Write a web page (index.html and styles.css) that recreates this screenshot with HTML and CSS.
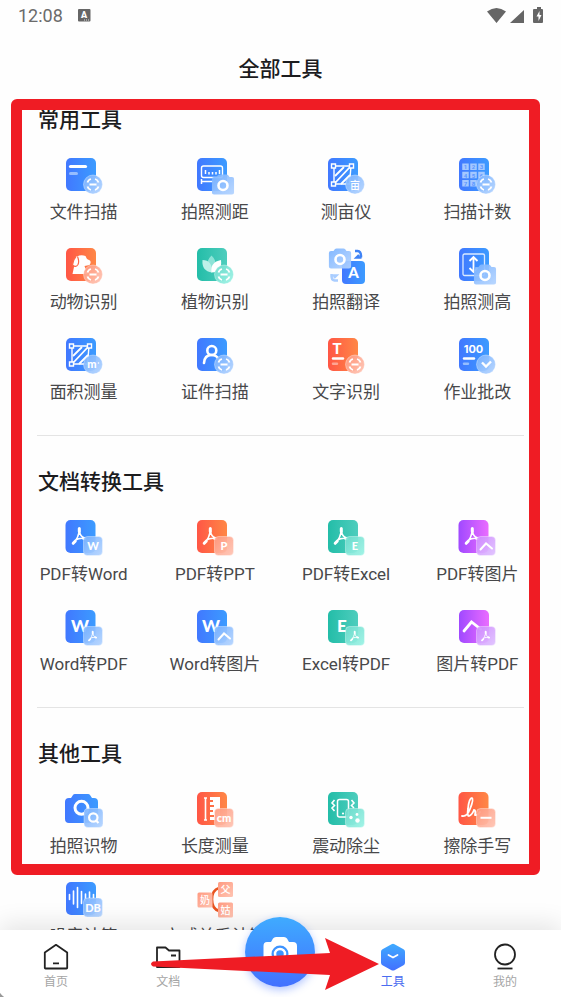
FILE: index.html
```html
<!DOCTYPE html>
<html lang="zh-CN">
<head>
    <meta charset="UTF-8">
    <meta name="viewport" content="width=device-width, initial-scale=1.0">
    <title>全部工具</title>
    <link rel="stylesheet" href="styles.css">
</head>
<body>
    <!-- Shared gradients and glyphs -->
    <svg class="sprite" aria-hidden="true">
        <defs>
            <linearGradient id="blue"><stop offset="0" stop-color="#4178ff"/><stop offset="1" stop-color="#3c9bff"/></linearGradient>
            <linearGradient id="orange"><stop offset="0" stop-color="#ff5645"/><stop offset="1" stop-color="#ff8746"/></linearGradient>
            <linearGradient id="teal"><stop offset="0" stop-color="#23bda8"/><stop offset="1" stop-color="#4ecdbd"/></linearGradient>
            <linearGradient id="purple"><stop offset="0" stop-color="#a049ff"/><stop offset="1" stop-color="#ea6cff"/></linearGradient>
            <linearGradient id="blueSoft" x2="1" y2="1"><stop offset="0" stop-color="#79b2ff"/><stop offset="1" stop-color="#b4d4ff"/></linearGradient>
            <linearGradient id="orangeSoft" x2="1" y2="1"><stop offset="0" stop-color="#ff9a80"/><stop offset="1" stop-color="#ffc4b3"/></linearGradient>
            <linearGradient id="tealSoft" x2="1" y2="1"><stop offset="0" stop-color="#70dccd"/><stop offset="1" stop-color="#9bf3e5"/></linearGradient>
            <linearGradient id="purpleSoft" x2="1" y2="1"><stop offset="0" stop-color="#d08bff"/><stop offset="1" stop-color="#dfc2ff"/></linearGradient>
            <linearGradient id="blueDown" x2="0" y2="1"><stop offset="0" stop-color="#3fabff"/><stop offset="1" stop-color="#4270ff"/></linearGradient>
        </defs>
        <symbol id="scan" viewBox="0 0 20 20">
            <path d="M4.500 8Q5.200 5.200 8 4.500M12 4.500q2.800.7 3.500 3.500M15.500 12q-.7 2.800-3.500 3.500M8 15.500Q5.200 14.800 4.500 12M6.500 10h7" fill="none" stroke="#fff" stroke-width="1.800"/>
        </symbol>
        <symbol id="pdf" viewBox="0 0 16 20">
            <path d="M8.300 3.500C8 8.500 6 13.500 2.500 17M8.300 4C8.500 8.500 10.500 11 14 12.500M4.500 14C7.500 12.200 10.500 11.800 14 12.500" fill="none" stroke="#fff" stroke-width="1.600" stroke-linecap="round"/>
            <path d="M8.300 2.600v3M2.200 17.300l2-2M12.500 12.300l1.500.4" stroke="#fff" stroke-width="3" stroke-linecap="round"/>
        </symbol>
        <symbol id="area" viewBox="0 0 40 38">
            <g fill="none" stroke="#fff">
                <path d="M9 18l9-9M9 25L24 9M15 26l9-9" stroke-width="1.800"/>
                <path d="M8 8h17l-1.500 18H8z" stroke-width="1.400"/>
                <path class="knot" d="M5.500 6h4v4h-4zM23.500 6h4v4h-4zM5.500 24h4v4h-4z" stroke-width="1.400"/>
            </g>
        </symbol>
        <symbol id="camera" viewBox="0 0 23 21">
            <path d="M2.500 3H5L6.500 1Q7 .4 8 .4h7q1 0 1.500.6L18 3h2.500Q22.600 3 22.600 5v13.500q0 2.100-2.100 2.100h-18Q.4 20.600.4 18.500V5Q.4 3 2.500 3z" fill="url(#blueSoft)" opacity=".92"/>
            <circle cx="11.500" cy="11.500" r="4.500" fill="none" stroke="#fff" stroke-width="2.600"/>
        </symbol>
    </svg>

    <header class="status-bar">
        <span class="time">12:08</span>
        <svg class="ime" width="13" height="13" viewBox="0 0 13 13"><rect width="12.500" height="12.500" rx="1" fill="#666"/><text x="6" y="9" class="ime-text">A</text><path d="M6 11h5" stroke="#ddd" stroke-dasharray="1"/></svg>
        <svg class="signals" width="56" height="17" viewBox="0 0 56 17" fill="#666">
            <path d="M0 4.500Q9.500-2.500 19 4.500L9.500 16zM37 3v13H23zM48 2h2V0h4v2h1q1 0 1 1v12q0 1-1 1h-8q-1 0-1-1V3q0-1 1-1z"/>
            <path d="M52.500 4L49.500 9.500h2V14l3-6h-2z" fill="#fff"/>
        </svg>
    </header>
    <h1>全部工具</h1>

    <main>
        <section>
            <h2>常用工具</h2>
            <div class="tools">
                <a class="tool" href="#">
                    <svg class="icon" viewBox="0 0 40 38">
                        <rect x="2" width="30" height="33" rx="5" fill="url(#blue)"/>
                        <path d="M6.500 8.500h15" stroke="#fff" stroke-width="3.200" stroke-linecap="round"/>
                        <path d="M6.500 15.500h6" stroke="#96bdff" stroke-width="3" stroke-linecap="round"/>
                        <circle cx="29" cy="26.500" r="9.500" fill="url(#blueSoft)" class="badge"/>
                        <use href="#scan" x="19" y="16.500" width="20" height="20"/>
                    </svg>
                    <span>文件扫描</span>
                </a>
                <a class="tool" href="#">
                    <svg class="icon" viewBox="0 0 40 38">
                        <rect x="2" width="30" height="33" rx="5" fill="url(#blue)"/>
                        <rect x="6.500" y="8" width="21" height="11.500" rx="2" fill="none" stroke="#fff" stroke-width="1.400"/>
                        <path d="M10.500 12v4M14 14v2.500M17.500 14v2.500M21 14v2.500M24.500 12v4M6.500 21v5M6.500 23.500h12" stroke="#fff" stroke-width="1.500"/>
                        <use href="#camera" x="16.500" y="16" width="23" height="21"/>
                    </svg>
                    <span>拍照测距</span>
                </a>
                <a class="tool" href="#">
                    <svg class="icon" viewBox="0 0 40 38">
                        <rect x="2" width="30" height="33" rx="5" fill="url(#blue)"/>
                        <use href="#area" width="40" height="38"/>
                        <circle cx="29" cy="26.500" r="9.500" fill="url(#blueSoft)" class="badge"/>
                        <text x="29" y="30.500" class="glyph mu">亩</text>
                    </svg>
                    <span>测亩仪</span>
                </a>
                <a class="tool" href="#">
                    <svg class="icon" viewBox="0 0 40 38">
                        <rect x="2" width="30" height="33" rx="5" fill="url(#blue)"/>
                        <path d="M8.500 5.500v23M16.500 5.500v23M24.500 5.500v23" stroke="#a4c8ff" stroke-width="6.500" stroke-dasharray="6.500 1.700"/>
                        <g class="digits">
                            <text x="8.500" y="11.200">1</text><text x="16.500" y="11.200">2</text><text x="24.500" y="11.200">3</text>
                            <text x="8.500" y="19.500">4</text><text x="16.500" y="19.500">5</text><text x="24.500" y="19.500">6</text>
                            <text x="8.500" y="27.700">7</text><text x="16.500" y="27.700">8</text>
                        </g>
                        <circle cx="29" cy="26.500" r="9.500" fill="url(#blueSoft)" class="badge"/>
                        <use href="#scan" x="19" y="16.500" width="20" height="20"/>
                    </svg>
                    <span>扫描计数</span>
                </a>
                <a class="tool" href="#">
                    <svg class="icon" viewBox="0 0 40 38">
                        <rect x="2" width="30" height="33" rx="5" fill="url(#orange)"/>
                        <path d="M13 8.500q4-2 8.500-.5l1.500 3 3 1.500q1.500 2-.5 4.500l-5 1 3 8H8.500l1.500-7z" fill="#fff"/>
                        <path d="M12 8.500q-3 3-3.500 8.500 3.500 3 5.500-.5 1.500-3-.5-8" fill="#fff" stroke="#ff6846" stroke-width="1.200"/>
                        <circle cx="29" cy="26.500" r="9.500" fill="url(#orangeSoft)" class="badge"/>
                        <use href="#scan" x="19" y="16.500" width="20" height="20"/>
                    </svg>
                    <span>动物识别</span>
                </a>
                <a class="tool" href="#">
                    <svg class="icon" viewBox="0 0 40 38">
                        <rect x="2" width="30" height="33" rx="5" fill="url(#teal)"/>
                        <path d="M16.500 7.500q8 8 0 17-8-9 0-17z" fill="#8de3d7"/>
                        <path d="M7.500 12q10 0 9.500 12.500Q6.500 23 7.500 12z" fill="#bdf1e9"/>
                        <path d="M26 12q1.500 12-9.500 12.500Q15 14 26 12z" fill="#fff"/>
                        <circle cx="29" cy="26.500" r="9.500" fill="url(#tealSoft)" class="badge"/>
                        <use href="#scan" x="19" y="16.500" width="20" height="20"/>
                    </svg>
                    <span>植物识别</span>
                </a>
                <a class="tool" href="#">
                    <svg class="icon" viewBox="0 0 40 38">
                        <rect x="16" y="13" width="23" height="23" rx="4" fill="url(#blue)"/>
                        <use href="#camera" x="2" y="0" width="24" height="21"/>
                        <text x="27.500" y="30" class="glyph medium">A</text>
                        <path d="M29 3h2.500q4 .5 3.500 6.500M35.500 9.500h-5L33 7" fill="none" stroke="#3f83f5" stroke-width="2.400"/>
                        <path d="M5.500 26q-.5 6 3 6.500h3.500M5.500 27.500h5L8 30" fill="none" stroke="#a9cdff" stroke-width="2.400"/>
                    </svg>
                    <span>拍照翻译</span>
                </a>
                <a class="tool" href="#">
                    <svg class="icon" viewBox="0 0 40 38">
                        <rect x="2" width="30" height="33" rx="5" fill="url(#blue)"/>
                        <rect x="6" y="6" width="21.500" height="21.500" rx="1.500" fill="none" stroke="#dceaff" stroke-width="1.300"/>
                        <path d="M16.500 9.500v14M12.500 13l4-4 4 4M12.500 20l4 4 4-4" fill="none" stroke="#fff" stroke-width="1.800"/>
                        <use href="#camera" x="16.500" y="16" width="23" height="21"/>
                    </svg>
                    <span>拍照测高</span>
                </a>
                <a class="tool" href="#">
                    <svg class="icon" viewBox="0 0 40 38">
                        <rect x="2" width="30" height="33" rx="5" fill="url(#blue)"/>
                        <use href="#area" width="40" height="38"/>
                        <circle cx="29" cy="26.500" r="9.500" fill="url(#blueSoft)" class="badge"/>
                        <text x="28" y="29.500" class="glyph small">m</text>
                        <circle cx="34.500" cy="25" r=".8" fill="#fff"/>
                    </svg>
                    <span>面积测量</span>
                </a>
                <a class="tool" href="#">
                    <svg class="icon" viewBox="0 0 40 38">
                        <rect x="2" width="30" height="33" rx="5" fill="url(#blue)"/>
                        <circle cx="16.800" cy="12.500" r="4.500" fill="none" stroke="#fff" stroke-width="2.600"/>
                        <path d="M9 25q.5-8 7.500-8 5 0 7 4" fill="none" stroke="#fff" stroke-width="2.600" stroke-linecap="round"/>
                        <circle cx="29" cy="26.500" r="9.500" fill="url(#blueSoft)" class="badge"/>
                        <use href="#scan" x="19" y="16.500" width="20" height="20"/>
                    </svg>
                    <span>证件扫描</span>
                </a>
                <a class="tool" href="#">
                    <svg class="icon" viewBox="0 0 40 38">
                        <rect x="2" width="30" height="33" rx="5" fill="url(#orange)"/>
                        <text x="11" y="16" class="glyph medium">T</text>
                        <path d="M7 20.500h10" stroke="#fff" stroke-width="2.400" stroke-linecap="round"/>
                        <path d="M7 25.700h4" stroke="#ffa594" stroke-width="2.400" stroke-linecap="round"/>
                        <circle cx="29" cy="26.500" r="9.500" fill="url(#orangeSoft)" class="badge"/>
                        <use href="#scan" x="19" y="16.500" width="20" height="20"/>
                    </svg>
                    <span>文字识别</span>
                </a>
                <a class="tool" href="#">
                    <svg class="icon" viewBox="0 0 40 38">
                        <rect x="2" width="30" height="33" rx="5" fill="url(#blue)"/>
                        <text x="16.500" y="15" class="glyph score">100</text>
                        <path d="M7 20.500h10" stroke="#fff" stroke-width="2.400" stroke-linecap="round"/>
                        <path d="M7 25.700h4" stroke="#96bdff" stroke-width="2.400" stroke-linecap="round"/>
                        <circle cx="29" cy="26.500" r="9.500" fill="url(#blueSoft)" class="badge"/>
                        <path d="M25 24.500l4 4 5-5" fill="none" stroke="#fff" stroke-width="2.400"/>
                    </svg>
                    <span>作业批改</span>
                </a>
            </div>
        </section>

        <section>
            <h2>文档转换工具</h2>
            <div class="tools">
                <a class="tool" href="#">
                    <svg class="icon" viewBox="0 0 40 38">
                        <rect x="1.500" width="30" height="33" rx="5" fill="url(#blue)"/>
                        <use href="#pdf" x="7" y="6" width="16" height="20"/>
                        <rect x="19.500" y="16.500" width="19" height="19" rx="4" fill="url(#blueSoft)" class="badge"/>
                        <text x="29" y="30" class="glyph small">W</text>
                    </svg>
                    <span>PDF转Word</span>
                </a>
                <a class="tool" href="#">
                    <svg class="icon" viewBox="0 0 40 38">
                        <rect x="2" width="30" height="33" rx="5" fill="url(#orange)"/>
                        <use href="#pdf" x="7" y="6" width="16" height="20"/>
                        <rect x="19.500" y="16.500" width="19" height="19" rx="4" fill="url(#orangeSoft)" class="badge"/>
                        <text x="29" y="30" class="glyph small">P</text>
                    </svg>
                    <span>PDF转PPT</span>
                </a>
                <a class="tool" href="#">
                    <svg class="icon" viewBox="0 0 40 38">
                        <rect x="2" width="30" height="33" rx="5" fill="url(#teal)"/>
                        <use href="#pdf" x="7" y="6" width="16" height="20"/>
                        <rect x="19.500" y="16.500" width="19" height="19" rx="4" fill="url(#tealSoft)" class="badge"/>
                        <text x="29" y="30" class="glyph small">E</text>
                    </svg>
                    <span>PDF转Excel</span>
                </a>
                <a class="tool" href="#">
                    <svg class="icon" viewBox="0 0 40 38">
                        <rect x="1.500" width="30" height="33" rx="5" fill="url(#purple)"/>
                        <use href="#pdf" x="7" y="6" width="16" height="20"/>
                        <rect x="19.500" y="16.500" width="19" height="19" rx="4" fill="url(#purpleSoft)" class="badge"/>
                        <path d="M23.500 29.500l5.500-6 6 5" fill="none" stroke="#fff" stroke-width="2" stroke-linecap="round"/>
                    </svg>
                    <span>PDF转图片</span>
                </a>
                <a class="tool" href="#">
                    <svg class="icon" viewBox="0 0 40 38">
                        <rect x="1.500" width="30" height="33" rx="5" fill="url(#blue)"/>
                        <text x="16" y="22" class="glyph large">W</text>
                        <rect x="19.500" y="16.500" width="19" height="19" rx="4" fill="url(#blueSoft)" class="badge"/>
                        <use href="#pdf" x="23.500" y="20" width="10" height="12"/>
                    </svg>
                    <span>Word转PDF</span>
                </a>
                <a class="tool" href="#">
                    <svg class="icon" viewBox="0 0 40 38">
                        <rect x="2" width="30" height="33" rx="5" fill="url(#blue)"/>
                        <text x="16" y="22" class="glyph large">W</text>
                        <rect x="19.500" y="16.500" width="19" height="19" rx="4" fill="url(#blueSoft)" class="badge"/>
                        <path d="M23.500 29.500l5.500-6 6 5" fill="none" stroke="#fff" stroke-width="2" stroke-linecap="round"/>
                    </svg>
                    <span>Word转图片</span>
                </a>
                <a class="tool" href="#">
                    <svg class="icon" viewBox="0 0 40 38">
                        <rect x="2" width="30" height="33" rx="5" fill="url(#teal)"/>
                        <text x="16" y="22" class="glyph large">E</text>
                        <rect x="19.500" y="16.500" width="19" height="19" rx="4" fill="url(#tealSoft)" class="badge"/>
                        <use href="#pdf" x="23.500" y="20" width="10" height="12"/>
                    </svg>
                    <span>Excel转PDF</span>
                </a>
                <a class="tool" href="#">
                    <svg class="icon" viewBox="0 0 40 38">
                        <rect x="2" width="30" height="33" rx="5" fill="url(#purple)"/>
                        <path d="M7 21l7.500-9 9 7" fill="none" stroke="#fff" stroke-width="2.800" stroke-linecap="round"/>
                        <rect x="19.500" y="16.500" width="19" height="19" rx="4" fill="url(#purpleSoft)" class="badge"/>
                        <use href="#pdf" x="23.500" y="20" width="10" height="12"/>
                    </svg>
                    <span>图片转PDF</span>
                </a>
            </div>
        </section>

        <section>
            <h2>其他工具</h2>
            <div class="tools">
                <a class="tool" href="#">
                    <svg class="icon" viewBox="0 0 40 38">
                        <path d="M5 6h2l2-3q.5-1 2-1h13q1.500 0 2 1l2 3h2q4 0 4 4v17q0 4-4 4H5q-4 0-4-4V10q0-4 4-4z" fill="url(#blue)"/>
                        <circle cx="17.500" cy="15.800" r="6.500" fill="none" stroke="#fff" stroke-width="3"/>
                        <rect x="20" y="16.500" width="19" height="19" rx="4" fill="url(#blueSoft)" class="badge"/>
                        <circle cx="29.300" cy="25.500" r="4.200" fill="none" stroke="#fff" stroke-width="2.200"/>
                        <path d="M31.500 28l3 3" stroke="#fff" stroke-width="2.200"/>
                    </svg>
                    <span>拍照识物</span>
                </a>
                <a class="tool" href="#">
                    <svg class="icon" viewBox="0 0 40 38">
                        <rect x="2" width="30" height="33" rx="5" fill="url(#orange)"/>
                        <path d="M10.500 6v22M9 6h3M9 28h3" fill="none" stroke="#fff" stroke-width="1.600"/>
                        <path d="M15 5h10v23H15v-3h4v-2h-4v-3h3v-2h-3v-3h4v-2h-4V10h3V8h-3z" fill="#fff"/>
                        <rect x="19.500" y="16.500" width="19" height="19" rx="4" fill="url(#orangeSoft)" class="badge"/>
                        <text x="29" y="30" class="glyph small">cm</text>
                    </svg>
                    <span>长度测量</span>
                </a>
                <a class="tool" href="#">
                    <svg class="icon" viewBox="0 0 40 38">
                        <rect x="2" width="30" height="33" rx="5" fill="url(#teal)"/>
                        <rect x="11.500" y="7.500" width="11" height="17.500" rx="2" fill="none" stroke="#fff" stroke-width="1.500"/>
                        <path d="M8.500 8L6 11l2.500 2.500L6 16l2.500 3M25.500 8l2.500 3-2.500 2.500L28 16" fill="none" stroke="#fff" stroke-width="1.600"/>
                        <circle cx="17" cy="21.500" r="1.100" fill="#fff"/>
                        <rect x="19.500" y="16.500" width="19" height="19" rx="4" fill="url(#tealSoft)" class="badge"/>
                        <g fill="#fff"><circle cx="25" cy="25.500" r="1.700"/><circle cx="31" cy="22.500" r="1.400"/><circle cx="31.500" cy="28.500" r="2.200"/></g>
                    </svg>
                    <span>震动除尘</span>
                </a>
                <a class="tool" href="#">
                    <svg class="icon" viewBox="0 0 40 38">
                        <rect x="1.500" width="30" height="33" rx="5" fill="url(#orange)"/>
                        <path d="M5 24q5 1 8-7 4-10 2-11-3 0-4 11-1 7 1 7 3-1 5-6 2 0 1 5 2 1 5-3" fill="none" stroke="#fff" stroke-width="1.800" stroke-linecap="round"/>
                        <rect x="19.500" y="16.500" width="19" height="19" rx="4" fill="url(#orangeSoft)" class="badge"/>
                        <path d="M23.500 25.800h11" stroke="#fff" stroke-width="2"/>
                    </svg>
                    <span>擦除手写</span>
                </a>
                <a class="tool" href="#">
                    <svg class="icon" viewBox="0 0 40 38">
                        <rect x="2" width="30" height="33" rx="5" fill="url(#blue)"/>
                        <path d="M5.500 12.500v5M9.500 9v13M13.500 5.500v20M17.500 9.500v12M21.500 12v7M25.500 10v8M29.500 12.500v4" stroke="#fff" stroke-width="1.600" stroke-linecap="round"/>
                        <rect x="19.500" y="16" width="19" height="19" rx="4" fill="url(#blueSoft)" class="badge"/>
                        <text x="29" y="29.500" class="glyph small">DB</text>
                    </svg>
                    <span>噪音计算</span>
                </a>
                <a class="tool" href="#">
                    <svg class="icon" viewBox="0 0 40 38">
                        <path d="M24 6q-7 2-7 11.500T24 29" fill="none" stroke="#e8541f" stroke-width="2.600"/>
                        <rect x="2.500" y="10.500" width="15" height="15" rx="1.500" fill="url(#orangeSoft)"/>
                        <rect x="23" y="0" width="15" height="15" rx="1.500" fill="url(#orangeSoft)"/>
                        <rect x="23" y="20.500" width="15" height="15" rx="1.500" fill="url(#orangeSoft)"/>
                        <text x="10" y="21.500" class="glyph kin">奶</text>
                        <text x="30.500" y="11" class="glyph kin">父</text>
                        <text x="30.500" y="31.500" class="glyph kin">姑</text>
                    </svg>
                    <span>亲戚关系计算</span>
                </a>
            </div>
        </section>
    </main>

    <nav class="tab-bar">
        <a class="tab" href="#">
            <svg width="28" height="28" viewBox="0 0 28 28" fill="none" stroke="#222" stroke-width="1.800" stroke-linejoin="round"><path d="M14 1.800L25.200 9.500v15.300q0 .7-.7.7h-21q-.7 0-.7-.7V9.500zM11 20.300h6"/></svg>
            <span>首页</span>
        </a>
        <a class="tab" href="#">
            <svg width="28" height="28" viewBox="0 0 28 28" fill="none" stroke="#222" stroke-width="1.800" stroke-linejoin="round"><path d="M3 4.500h8.500l3.500 3h10.500v16.500H3zM17 12.500h5"/></svg>
            <span>文档</span>
        </a>
        <div class="tab">
            <button class="shoot" type="button" aria-label="拍照">
                <svg width="70" height="70" viewBox="0 0 70 70">
                    <path d="M22 25h4l2-3.500q1-1.500 3-1.500h8q2 0 3 1.500l2 3.500h4q4 0 4 4v17q0 4-4 4H22q-3.500 0-3.500-4V29q0-4 3.500-4z" fill="#fff"/>
                    <circle cx="35" cy="37" r="7.500" fill="#3d93ff" stroke="#3d93ff" stroke-width="2"/>
                    <circle cx="35" cy="37" r="5" fill="none" stroke="#fff" stroke-width="2.500"/>
                </svg>
            </button>
        </div>
        <a class="tab active" href="#">
            <svg width="28" height="28" viewBox="0 0 28 28"><path d="M12.500 1.200q1.500-.8 3 0l9 5q1.500.8 1.500 2.500v11q0 1.700-1.500 2.500l-9 5q-1.500.8-3 0l-9-5Q2 21.400 2 19.700v-11Q2 7 3.500 6.200z" fill="url(#blueDown)"/><path d="M9.500 12l4.500 2.500 4.500-2.500" fill="none" stroke="#fff" stroke-width="1.800" stroke-linecap="round"/></svg>
            <span>工具</span>
        </a>
        <a class="tab" href="#">
            <svg width="28" height="28" viewBox="0 0 28 28" fill="none" stroke="#222" stroke-width="1.800"><circle cx="14" cy="11.500" r="10"/><path d="M6.500 25.500h15"/></svg>
            <span>我的</span>
        </a>
        <svg class="arrow" width="230" height="54" viewBox="0 0 230 54"><path d="M3 24.500L180 16 175 1 229 27 175 53 180 38 3 29.500Q-1 27 3 24.500z" fill="#ef1c24"/></svg>
    </nav>

    <div class="frame"></div>
</body>
</html>
```

FILE: styles.css
```css
* {
    box-sizing: border-box;
}

body {
    position: relative;
    display: flex;
    flex-direction: column;
    height: 100vh;
    margin: 0;
    overflow: hidden;
    background-color: #fefefe;
    color: #1c1c1e;
    font-family: Roboto, "Noto Sans CJK SC", sans-serif;
}

a {
    color: inherit;
    text-decoration: none;
}

.sprite {
    position: absolute;
    width: 0;
    height: 0;
}

/* Status bar */
.status-bar {
    display: flex;
    flex: none;
    align-items: center;
    height: 31px;
    padding: 0 18px;
    color: #6b6b6b;
    font-size: 18px;
}

.ime {
    margin-left: 15px;
}

.signals {
    margin-left: auto;
}

.ime-text {
    fill: #fff;
    font-size: 9px;
    font-weight: 900;
    text-anchor: middle;
}

h1 {
    flex: none;
    margin: 0;
    padding-top: 2px;
    font-size: 21px;
    font-weight: 500;
    line-height: 73px;
    text-align: center;
}

/* Tool list */
main {
    flex: 1;
    min-height: 0;
    overflow: hidden;
}

section + section::before {
    content: "";
    display: block;
    height: 1px;
    margin: 31px 37px 32px;
    background-color: #e4e4e4;
}

h2 {
    margin: 0 38px 24px;
    font-size: 21px;
    font-weight: 500;
    line-height: 28px;
}

.tools {
    display: grid;
    grid-template-columns: repeat(4, 1fr);
    row-gap: 24px;
    padding: 0 18px;
}

.tool {
    display: flex;
    flex-direction: column;
    align-items: center;
    gap: 4px;
    color: #48484a;
    font-size: 17px;
    line-height: 24px;
    white-space: nowrap;
}

.icon {
    width: 40px;
    height: 38px;
}

.badge {
    fill-opacity: 0.93;
    stroke: #fff;
    stroke-opacity: 0.35;
}

.knot {
    fill: #4184ff;
}

.glyph {
    fill: #fff;
    font-family: Lato, "Noto Sans CJK SC", sans-serif;
    font-weight: 900;
    text-anchor: middle;
}

.small {
    font-size: 11px;
}

.medium {
    font-size: 15px;
}

.large {
    font-size: 17px;
}

.score {
    font-family: Inter, sans-serif;
    font-size: 11px;
    font-weight: 700;
}

.mu,
.kin {
    font-size: 10px;
    font-weight: 500;
}

.digits {
    fill: #5b97ff;
    font-size: 6px;
    font-weight: 700;
    text-anchor: middle;
}

/* Bottom tabs */
.tab-bar {
    position: relative;
    display: grid;
    flex: none;
    grid-template-columns: repeat(5, 1fr);
    height: 67px;
    padding-top: 13px;
    background: radial-gradient(circle at 10px -2px, transparent 11px, #999 12px) left bottom / 6px 8px no-repeat, #fff;
    box-shadow: 0 -6px 24px rgba(0, 0, 0, 0.1);
}

.tab {
    display: flex;
    flex-direction: column;
    align-items: center;
    gap: 3px;
    color: #a5a5a5;
    font-size: 12px;
    line-height: 16px;
}

.tab.active {
    color: #4a6cf0;
}

.shoot {
    flex: none;
    width: 70px;
    height: 70px;
    margin-top: -26px;
    padding: 0;
    border: none;
    border-radius: 50%;
    background: linear-gradient(#3fabff, #4270ff);
    box-shadow: 0 3px 8px rgba(66, 112, 255, 0.4);
    cursor: pointer;
}

/* Red marks over the page */
.arrow {
    position: absolute;
    top: 7px;
    left: 150px;
    pointer-events: none;
}

.frame {
    position: absolute;
    top: 99px;
    right: 21px;
    bottom: 122px;
    left: 11px;
    border: 11px solid #ef1c24;
    border-radius: 6px;
    pointer-events: none;
}
```
